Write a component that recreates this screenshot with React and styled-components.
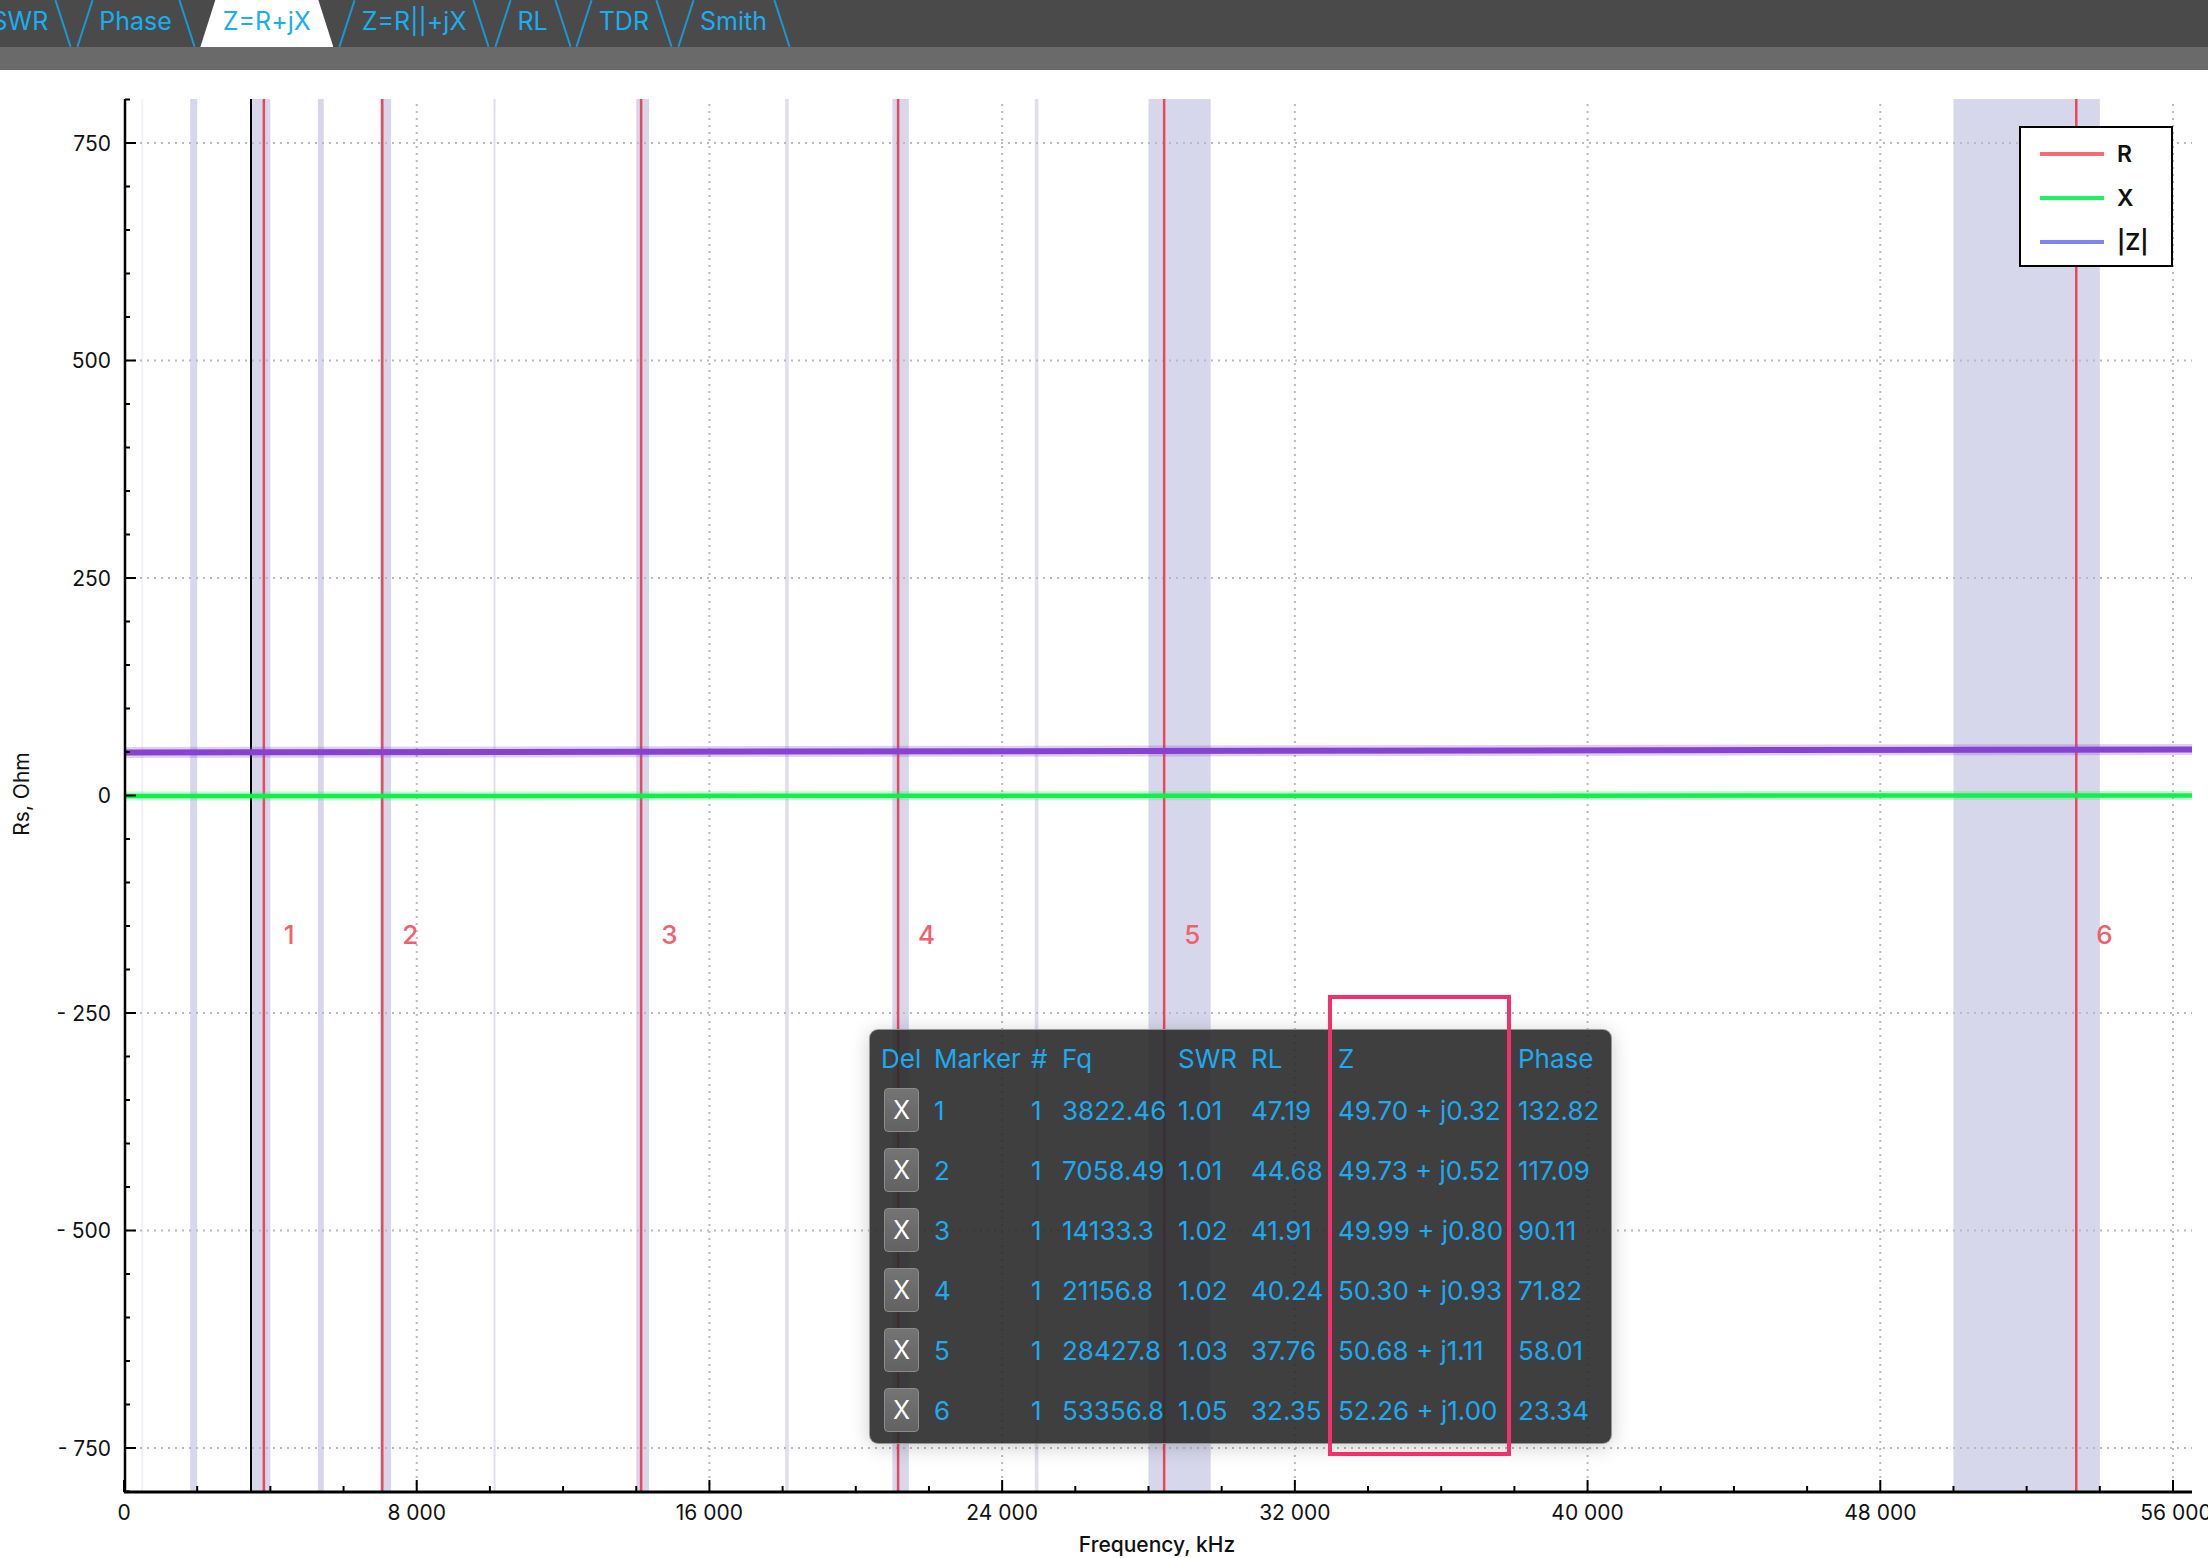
import React from "react"
import styled, { createGlobalStyle, css } from "styled-components"

const GlobalStyle = createGlobalStyle`
  html, body {
    margin: 0;
    padding: 0;
    background: #ffffff;
    font-family: Inter, "Liberation Sans", sans-serif;
  }
`

// chart scale: page pixels
const X0 = 124
const KX = (2173 - 124) / 56000
const Y0 = 794.5
const KY = 217.5 / 250
const TOP = 98
const AXIS_Y = 1491
const RIGHT = 2192

const fx = (f) => X0 + f * KX
const fy = (v) => Y0 - v * KY

const TABS = ["SWR", "Phase", "Z=R+jX", "Z=R||+jX", "RL", "TDR", "Smith"]

const BANDS = [
  [472, 479, 0.35],
  [1810, 2000, 1],
  [3500, 4000, 1],
  [5300, 5460, 1],
  [7000, 7300, 1],
  [10100, 10150, 0.8],
  [14000, 14350, 1],
  [18068, 18168, 0.8],
  [21000, 21450, 1],
  [24890, 24990, 0.8],
  [28000, 29700, 1],
  [50000, 54000, 1],
]

const MARKERS = [
  { n: 1, fq: "3822.46", f: 3822.46, swr: "1.01", rl: "47.19", z: "49.70 + j0.32", phase: "132.82" },
  { n: 2, fq: "7058.49", f: 7058.49, swr: "1.01", rl: "44.68", z: "49.73 + j0.52", phase: "117.09" },
  { n: 3, fq: "14133.3", f: 14133.3, swr: "1.02", rl: "41.91", z: "49.99 + j0.80", phase: "90.11" },
  { n: 4, fq: "21156.8", f: 21156.8, swr: "1.02", rl: "40.24", z: "50.30 + j0.93", phase: "71.82" },
  { n: 5, fq: "28427.8", f: 28427.8, swr: "1.03", rl: "37.76", z: "50.68 + j1.11", phase: "58.01" },
  { n: 6, fq: "53356.8", f: 53356.8, swr: "1.05", rl: "32.35", z: "52.26 + j1.00", phase: "23.34" },
]

const range = (a, b, step) => {
  const out = []
  for (let v = a; v <= b; v += step) out.push(v)
  return out
}

const fmtK = (v) => (v === 0 ? "0" : `${Math.floor(v / 1000)} 000`)
const fmtY = (v) => (v < 0 ? `- ${-v}` : `${v}`)

function Chart() {
  const yMajor = range(-750, 750, 250)
  const yMinor = range(-800, 800, 50)
  const xMajor = range(0, 56000, 8000)
  const xMinor = range(0, 56000, 2000)

  return (
    <Plot viewBox="0 69 2208 1489" width="2208" height="1489">
      {BANDS.map(([a, b, o]) => (
        <rect key={a} x={fx(a)} y={TOP} width={Math.max(fx(b) - fx(a), 2)} height={AXIS_Y - TOP} fill="#d7d7ec" opacity={o} />
      ))}

      {yMajor.map((v) => (
        <line key={"gy" + v} x1={X0 + 2} x2={RIGHT} y1={fy(v)} y2={fy(v)} stroke="#b9b9bf" strokeWidth="2" strokeDasharray="2 5" />
      ))}
      {xMajor.slice(1).map((f) => (
        <line key={"gx" + f} x1={fx(f)} x2={fx(f)} y1={103} y2={AXIS_Y} stroke="#b9b9bf" strokeWidth="2" strokeDasharray="2 5" />
      ))}

      <line x1={251} x2={251} y1={TOP} y2={AXIS_Y} stroke="#000" strokeWidth="2" />

      {MARKERS.map((m) => (
        <g key={"m" + m.n}>
          <line x1={fx(m.f)} x2={fx(m.f)} y1={TOP} y2={AXIS_Y} stroke="#e8475c" strokeWidth="2.5" />
          <text x={fx(m.f) + 20} y={943} fill="#f0616f" fontSize="26" fontFamily="Inter, sans-serif" fontWeight="500">
            {m.n}
          </text>
        </g>
      ))}

      {/* curves */}
      <line x1={X0} x2={RIGHT} y1={795} y2={794.5} stroke="#17ef4f" strokeWidth="9" opacity="0.25" />
      <line x1={X0} x2={RIGHT} y1={795} y2={794.5} stroke="#13ee4c" strokeWidth="4.5" />
      <line x1={X0} x2={RIGHT} y1={751.5} y2={748.5} stroke="#8a44d2" strokeWidth="11" opacity="0.25" />
      <line x1={X0} x2={RIGHT} y1={751.5} y2={748.5} stroke="#8643cf" strokeWidth="6" />

      {/* axes */}
      <line x1={125} x2={125} y1={TOP} y2={AXIS_Y + 1} stroke="#000" strokeWidth="2.5" />
      <line x1={124} x2={RIGHT} y1={AXIS_Y} y2={AXIS_Y} stroke="#000" strokeWidth="3" />

      {yMinor.map((v) => (
        <line key={"ty" + v} x1={125} x2={v % 250 === 0 ? 136 : 130} y1={fy(v)} y2={fy(v)} stroke="#000" strokeWidth="2" />
      ))}
      {xMinor.map((f) => (
        <line key={"tx" + f} x1={fx(f)} x2={fx(f)} y1={AXIS_Y} y2={f % 8000 === 0 ? AXIS_Y - 12 : AXIS_Y - 6} stroke="#000" strokeWidth="2" />
      ))}

      {yMajor.map((v) => (
        <AxisText key={"ly" + v} x={111} y={fy(v) + 7.5} textAnchor="end">
          {fmtY(v)}
        </AxisText>
      ))}
      {xMajor.map((f) => (
        <AxisText key={"lx" + f} x={f === 56000 ? 2176 : fx(f)} y={1519} textAnchor="middle">
          {fmtK(f)}
        </AxisText>
      ))}

      <AxisTitle x={1157} y={1551} textAnchor="middle" $weight={500}>
        Frequency, kHz
      </AxisTitle>
      <AxisTitle x={0} y={0} textAnchor="middle" transform="translate(29 793) rotate(-90)" $weight={400}>
        Rs, Ohm
      </AxisTitle>
    </Plot>
  )
}

function App() {
  return (
    <>
      <GlobalStyle />
      <Window>
        <TabBar>
          <TabRow>
            {TABS.map((t) => (
              <Tab key={t} $active={t === "Z=R+jX"}>
                {t}
              </Tab>
            ))}
          </TabRow>
        </TabBar>
        <SubBar />
        <ChartArea>
          <Chart />

          <Legend>
            <LegendRow>
              <Swatch $color="#f26b7b" />
              <LegendLabel>R</LegendLabel>
            </LegendRow>
            <LegendRow>
              <Swatch $color="#21f063" />
              <LegendLabel>X</LegendLabel>
            </LegendRow>
            <LegendRow>
              <Swatch $color="#8282f2" />
              <LegendLabel>|Z|</LegendLabel>
            </LegendRow>
          </Legend>

          <MarkerTable>
            <Head>Del</Head>
            <Head>Marker</Head>
            <Head>#</Head>
            <Head>Fq</Head>
            <Head>SWR</Head>
            <Head>RL</Head>
            <Head>Z</Head>
            <Head>Phase</Head>
            {MARKERS.map((m) => (
              <React.Fragment key={m.n}>
                <Cell>
                  <DelButton>X</DelButton>
                </Cell>
                <Cell>{m.n}</Cell>
                <Cell>1</Cell>
                <Cell>{m.fq}</Cell>
                <Cell>{m.swr}</Cell>
                <Cell>{m.rl}</Cell>
                <Cell>{m.z}</Cell>
                <Cell>{m.phase}</Cell>
              </React.Fragment>
            ))}
          </MarkerTable>

          <Highlight />
        </ChartArea>
      </Window>
    </>
  )
}

const Window = styled.div`
  width: 2208px;
  height: 1558px;
  display: flex;
  flex-direction: column;
  overflow: hidden;
  background: #fff;
`

const TabBar = styled.div`
  height: 47px;
  flex: none;
  background: #4a4a4a;
  overflow: hidden;
`

const TabRow = styled.div`
  display: flex;
  height: 100%;
  margin-left: -31px;
  gap: 6px;
`

const Tab = styled.div`
  position: relative;
  flex: none;
  display: flex;
  align-items: center;
  box-sizing: border-box;
  height: 47px;
  padding: 0 22.5px 5px;
  font-family: Inter, "Liberation Sans", sans-serif;
  font-size: 25px;
  color: #19aef0;
  white-space: pre;

  &::before,
  &::after {
    content: "";
    position: absolute;
    top: -1px;
    width: 1.5px;
    height: 49px;
    background: #1b98d2;
  }
  &::before {
    left: 7px;
    transform: rotate(18deg);
  }
  &::after {
    right: 7px;
    transform: rotate(-18deg);
  }

  ${(p) =>
    p.$active &&
    css`
      background: #ffffff;
      clip-path: polygon(15px 0, calc(100% - 15px) 0, 100% 100%, 0 100%);
      &::before,
      &::after {
        display: none;
      }
    `}
`

const SubBar = styled.div`
  height: 23px;
  flex: none;
  background: #6a6a6a;
`

const ChartArea = styled.div`
  position: relative;
  flex: none;
  height: 1489px;
  background: #fff;
`

const Plot = styled.svg`
  display: block;
`

const AxisText = styled.text`
  font-family: Inter, "Liberation Sans", sans-serif;
  font-size: 21px;
  fill: #111;
`

const AxisTitle = styled.text`
  font-family: Inter, "Liberation Sans", sans-serif;
  font-size: 21px;
  font-weight: ${(p) => p.$weight};
  fill: #111;
`

const Legend = styled.div`
  position: absolute;
  left: 2019px;
  top: 56px;
  width: 154px;
  height: 141px;
  box-sizing: border-box;
  border: 2px solid #000;
  background: #fff;
  padding-top: 4px;
  display: flex;
  flex-direction: column;
`

const LegendRow = styled.div`
  display: flex;
  align-items: center;
  height: 44px;
`

const Swatch = styled.div`
  width: 64px;
  height: 4px;
  margin-left: 19px;
  background: ${(p) => p.$color};
`

const LegendLabel = styled.span`
  margin-left: 13px;
  font-family: Inter, "Liberation Sans", sans-serif;
  font-size: 23px;
  font-weight: 600;
  color: #111;
`

const MarkerTable = styled.div`
  position: absolute;
  left: 869px;
  top: 959px;
  width: 743px;
  height: 415px;
  box-sizing: border-box;
  padding: 8px 0 0 11px;
  background: rgba(42, 42, 42, 0.9);
  border: 1px solid rgba(190, 190, 190, 0.7);
  border-radius: 9px;
  box-shadow: 0 3px 20px rgba(0, 0, 0, 0.2);
  display: grid;
  grid-template-columns: 53px 97px 31px 116px 73px 87px 180px 87px;
  grid-template-rows: 42px repeat(6, 60px);
  align-items: center;
  font-family: Inter, "Liberation Sans", sans-serif;
  font-size: 26px;
  color: #1ea9f0;
  white-space: nowrap;
`

const Head = styled.div`
  line-height: 30px;
`

const Cell = styled.div`
  display: flex;
  align-items: center;
  height: 60px;
`

const DelButton = styled.button`
  width: 35px;
  height: 44px;
  margin-left: 3px;
  padding: 0;
  display: flex;
  align-items: center;
  justify-content: center;
  background: linear-gradient(#747474, #626262);
  border: 1px solid #8c8c8c;
  border-radius: 4px;
  color: #fff;
  font-family: Inter, "Liberation Sans", sans-serif;
  font-size: 25px;
`

const Highlight = styled.div`
  position: absolute;
  left: 1328px;
  top: 925px;
  width: 183px;
  height: 461px;
  box-sizing: border-box;
  border: 4px solid #f2306e;
  pointer-events: none;
`

export default App
